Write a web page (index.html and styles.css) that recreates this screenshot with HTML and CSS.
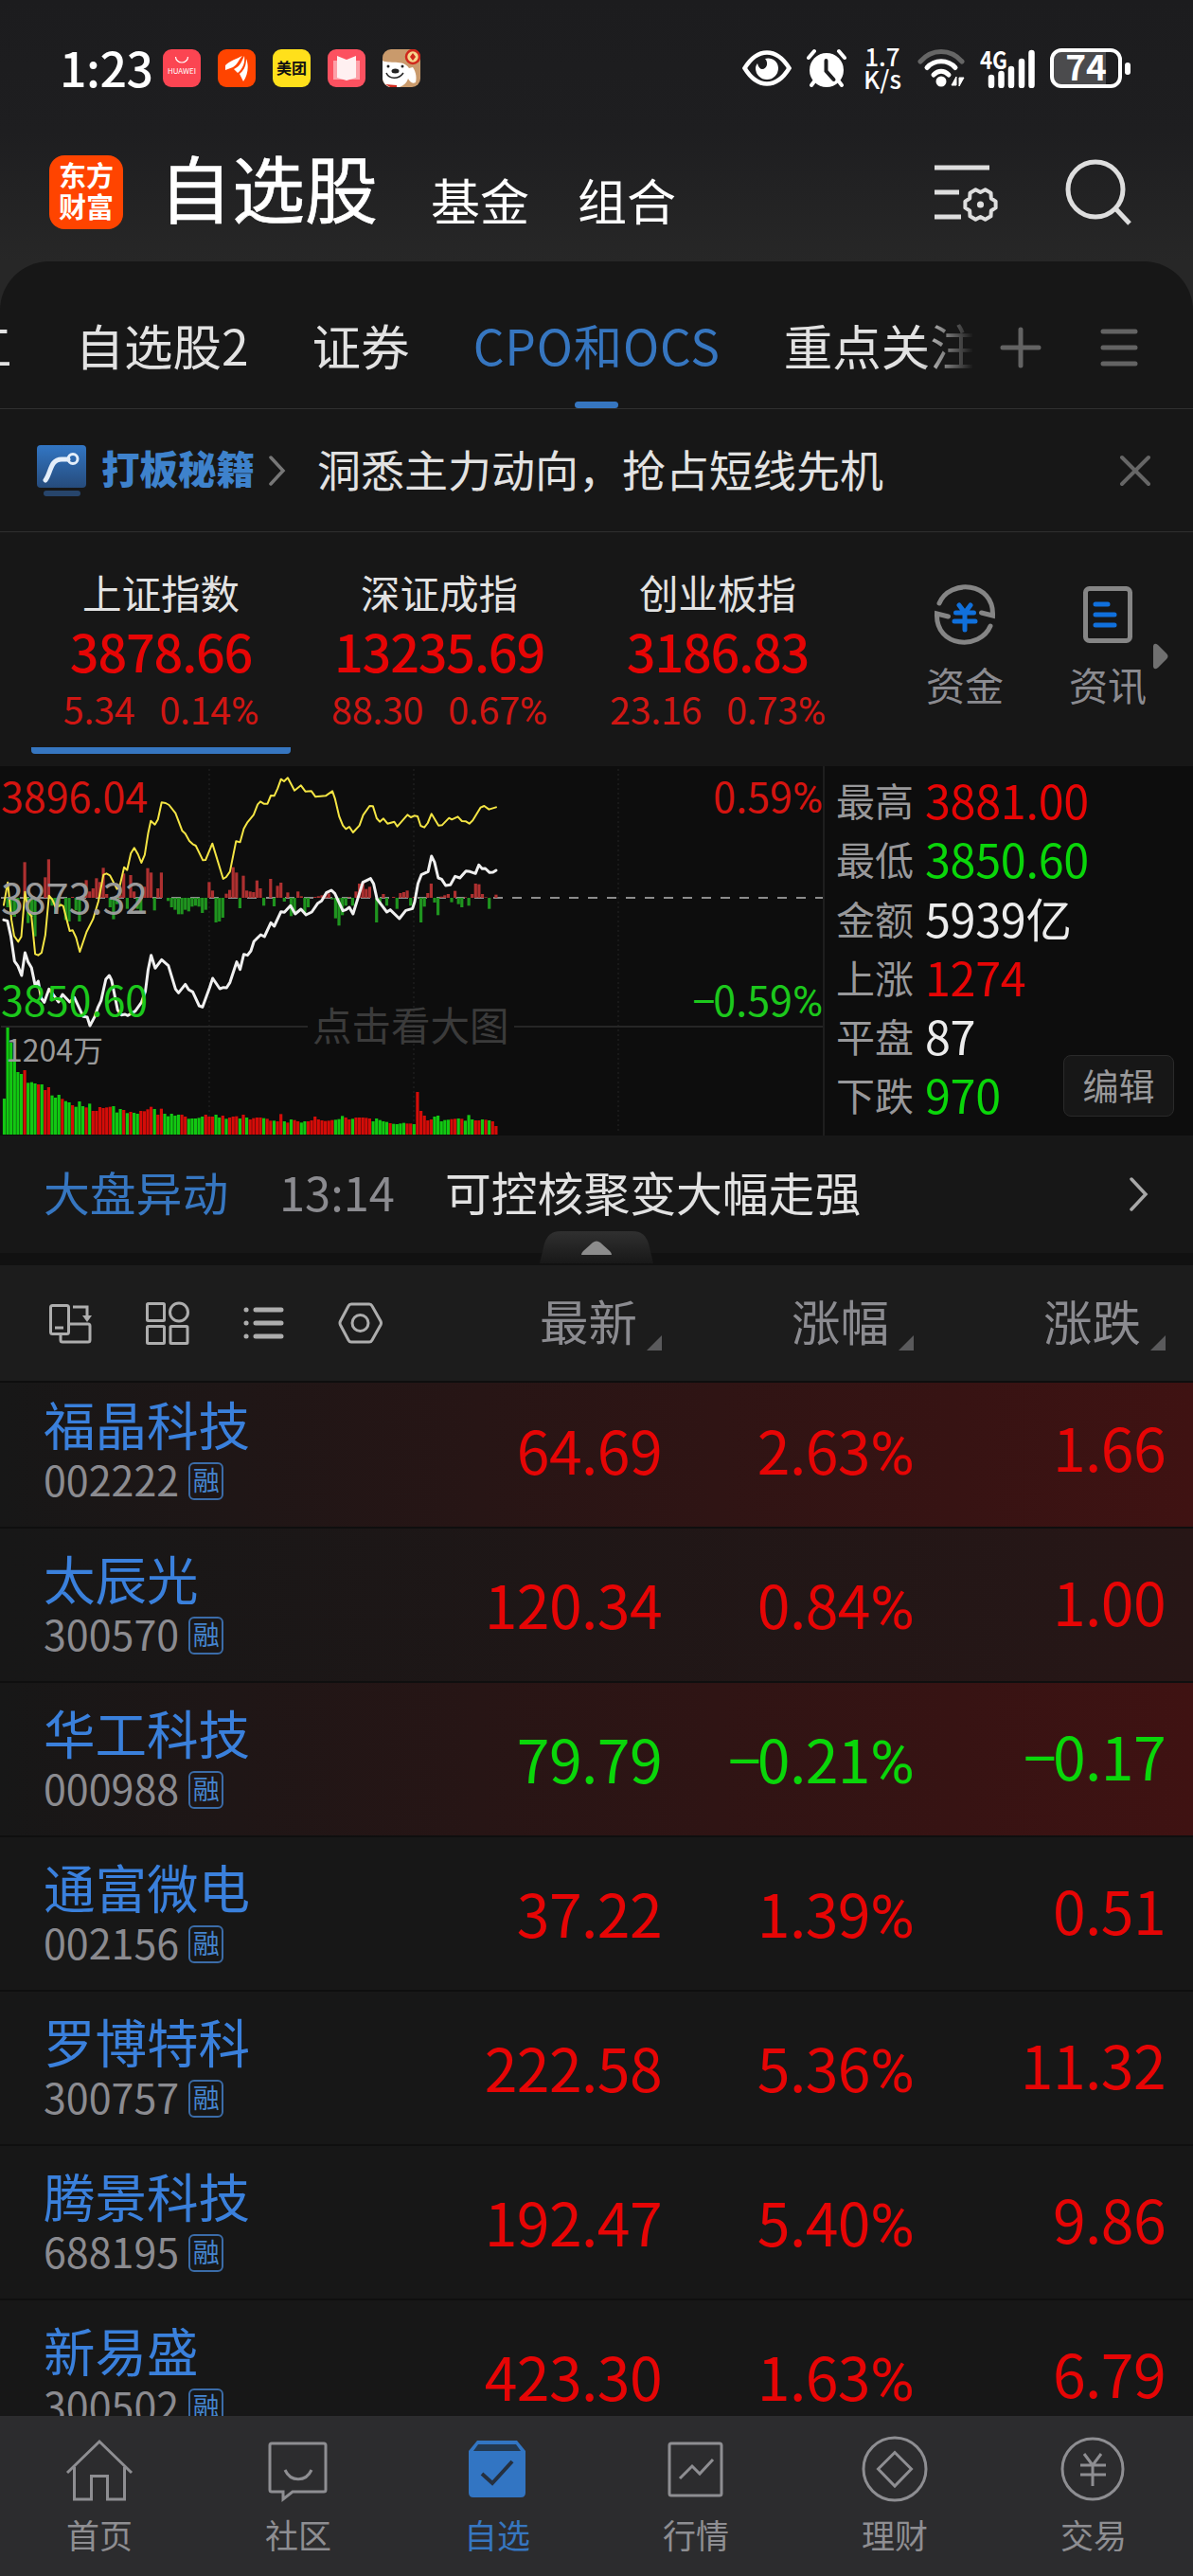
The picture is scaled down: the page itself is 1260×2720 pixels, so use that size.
FILE: index.html
```html
<!DOCTYPE html>
<html lang="zh-CN">
  <head>
    <meta charset="UTF-8" />
    <title>自选股</title>
    <link rel="stylesheet" href="styles.css">
  </head>

  <body>
    <div class="status">
      <span class="clock">1:23</span>
      <div class="apps">
        <svg class="app" viewBox="0 0 40 40">
          <rect width="40" height="40" rx="9" fill="#fb4552" />
          <path d="M13.500 8a6.500 6 0 0 0 13 0" fill="none" stroke="#fff" stroke-width="1.200" />
          <text x="5" y="26" font-size="8" fill="#fff" textLength="30">HUAWEI</text>
        </svg>
        <svg class="app" viewBox="0 0 40 40">
          <rect width="40" height="40" rx="9" fill="#ff4400" />
          <path d="M8 17c5-5 12-7 18-10-4 4-5 9-10 12l-8 3zM17 21c7-3 8-8 11-14 1 7-1 13-7 18zM23 26c5-4 7-9 7-16 3 7 2 17-3 24z" fill="#fff" />
        </svg>
        <svg class="app" viewBox="0 0 40 40">
          <rect width="40" height="40" rx="9" fill="#ffe01b" />
          <text x="20" y="26" font-size="16" font-weight="bold" text-anchor="middle" fill="#111">美团</text>
        </svg>
        <svg class="app" viewBox="0 0 40 40">
          <rect width="40" height="40" rx="9" fill="#fc5160" />
          <path d="M6 12h28v20H6z" fill="#fda0a8" />
          <path d="M10 7l10 4 10-4v23l-10 3-10-3z" fill="#fff0f1" />
        </svg>
        <svg class="app" viewBox="0 0 40 40">
          <rect width="40" height="40" rx="9" fill="#c99a6c" />
          <path d="M0 12c6 4 22-2 28 8l4-1c4 6 4 12 3 16-4 2-6-1-8-4-1 4-4 7-9 9H8c-4-1-7-4-8-9z" fill="#fff" />
          <circle cx="32" cy="8" r="7" fill="#f6d58d" stroke="#d0281c" stroke-width="2.500" />
          <path d="M32 4l3 4-3 4-3-4zM3 37l12 1v2H8z" fill="#d0281c" />
          <ellipse cx="13.500" cy="23" rx="4" ry="2.500" fill="#222" />
          <circle cx="6" cy="18" r="1.500" fill="#222" />
          <circle cx="21" cy="18" r="1.500" fill="#222" />
          <path d="M4 25c3 7 13 7 18 0" fill="none" stroke="#222" stroke-width="1.500" />
        </svg>
      </div>
      <div class="sys">
        <svg width="52" height="40" viewBox="0 0 52 40">
          <path d="M2.500 20C16-2 36-2 49.500 20 36 42 16 42 2.500 20z" fill="none" stroke="#fff" stroke-width="4.500" />
          <path d="M24 10c6-2 14 2 14 10a12 12 0 0 1-24 0c0-2 1-4 2-5 1 4 3 6 5 6 5 0 7-7 3-11z" fill="#fff" />
        </svg>
        <svg width="42" height="42" viewBox="0 0 42 42">
          <circle cx="21" cy="23" r="18" fill="#fff" />
          <path d="M2 10l6-7M40 10l-6-7M8 35l-3 4M34 35l3 4" stroke="#fff" stroke-width="4" stroke-linecap="round" />
          <path d="M20.500 13v11l8 9" fill="none" stroke="#1d1d1f" stroke-width="4" stroke-linecap="round" />
        </svg>
        <div class="rate"><span>1.7</span><span>K/s</span></div>
        <svg width="50" height="42" viewBox="0 0 50 42">
          <g fill="none" stroke="#fff" stroke-width="5" stroke-linecap="round">
            <path d="M3 14c12-14 32-14 44 0" stroke="#666" />
            <path d="M10 20.500c8-9 22-9 30 0" />
            <path d="M17 28c5-5 11-5 16 0" />
          </g>
          <circle cx="25" cy="35" r="5.500" fill="#fff" />
          <path d="M41 30v9h-5zM44 40v-9h5z" fill="#fff" stroke="#fff" />
        </svg>
        <svg width="60" height="42" viewBox="0 0 60 42">
          <text x="0" y="22" font-size="26" font-weight="bold" fill="#fff" textLength="29" lengthAdjust="spacingAndGlyphs">4G</text>
          <path d="M12 31v8M22.500 27v12M33 22v17M44 14v25M54.500 5v34" stroke="#fff" stroke-width="6.500" stroke-linecap="round" />
        </svg>
        <div class="battery"><span>74</span></div>
      </div>
    </div>

    <div class="top">
      <div class="logo"><span>东方</span><span>财富</span></div>
      <h1>自选股</h1>
      <a class="top-link">基金</a>
      <a class="top-link">组合</a>
      <svg class="top-set" width="70" height="66" viewBox="0 0 70 66" fill="none" stroke="#dedede" stroke-width="5">
        <path d="M1 7h58M1 33h26M1 59h28" />
        <path transform="translate(49.500 46)" d="M16.100 -3.400V3.400L11.300 6.500 11 12.300 5.100 15.700 0 13 -5.100 15.700 -11 12.300 -11.300 6.500 -16.100 3.400V-3.400L-11.300 -6.500 -11 -12.300 -5.100 -15.700 0 -13 5.100 -15.700 11 -12.300 11.300 -6.500z" stroke-width="4" stroke-linejoin="round" />
        <circle cx="49.500" cy="46" r="3.600" fill="#dedede" stroke="none" />
      </svg>
      <svg class="top-search" width="70" height="72" viewBox="0 0 70 72" fill="none" stroke="#dedede" stroke-width="5">
        <circle cx="32" cy="33" r="29" />
        <path d="M53 53l15 16" />
      </svg>
    </div>

    <div class="panel">
      <div class="tabs">
        <div class="strip">
          <a>工</a>
          <a>自选股2</a>
          <a>证券</a>
          <a class="on">CPO和OCS</a>
          <a>重点关注</a>
        </div>
        <svg width="44" height="44" viewBox="0 0 44 44" stroke="#636363" stroke-width="5" stroke-linecap="round">
          <path d="M3 22h38M22 3v38" />
        </svg>
        <svg class="menu" width="42" height="44" viewBox="0 0 42 44" stroke="#636363" stroke-width="5" stroke-linecap="round">
          <path d="M4 5h34M4 22h34M4 39h34" />
        </svg>
      </div>

      <div class="banner">
        <svg width="54" height="56" viewBox="0 0 54 56">
          <defs>
            <linearGradient id="g1" x1="0" y1="0" x2="0" y2="1">
              <stop offset="0" stop-color="#3276c4" />
              <stop offset="1" stop-color="#264b7b" />
            </linearGradient>
          </defs>
          <rect x="1" y="1" width="52" height="45" rx="4" fill="url(#g1)" />
          <rect x="8" y="49" width="39" height="6" rx="3" fill="#27456b" />
          <path d="M10 38c6-8 5-22 17-22h7" fill="none" stroke="#e4eefa" stroke-width="5" stroke-linecap="round" />
          <circle cx="39" cy="15.500" r="5" fill="none" stroke="#e4eefa" stroke-width="3" />
        </svg>
        <b>打板秘籍</b>
        <svg class="arrow" width="20" height="34" viewBox="0 0 20 34" fill="none" stroke="#777" stroke-width="3.500" stroke-linecap="round">
          <path d="M3 3l13 14L3 31" />
        </svg>
        <p>洞悉主力动向，抢占短线先机</p>
        <svg class="close" width="36" height="36" viewBox="0 0 36 36" stroke="#666" stroke-width="4" stroke-linecap="round">
          <path d="M4 4l28 28M32 4L4 32" />
        </svg>
      </div>

      <div class="indices">
        <div class="index on">
          <span class="iname">上证指数</span>
          <span class="ival">3878.66</span>
          <span class="ichg"><i>5.34</i><i>0.14<i class="pct">%</i></i></span>
        </div>
        <div class="index">
          <span class="iname">深证成指</span>
          <span class="ival">13235.69</span>
          <span class="ichg"><i>88.30</i><i>0.67<i class="pct">%</i></i></span>
        </div>
        <div class="index">
          <span class="iname">创业板指</span>
          <span class="ival">3186.83</span>
          <span class="ichg"><i>23.16</i><i>0.73<i class="pct">%</i></i></span>
        </div>
        <div class="tool first">
          <svg width="66" height="66" viewBox="0 0 66 66" fill="none" stroke="#858585" stroke-width="5">
            <path d="M6 21C17-5 64-2 62.500 34l-12-3" stroke-linecap="round" />
            <path d="M60 45C49 71 2 68 3.500 32l12 3" stroke-linecap="round" />
            <path d="M27 23l6 8 6-8M23.500 31h19M22 40h22M33 31v18" stroke="#1070dc" stroke-linecap="round" />
          </svg>
          <span>资金</span>
        </div>
        <div class="tool">
          <svg width="66" height="66" viewBox="0 0 66 66" fill="none" stroke="#858585" stroke-width="5">
            <rect x="9.500" y="5.500" width="47" height="55" rx="4" />
            <path d="M20 22h13M20 33h20M20 44h20" stroke="#1070dc" stroke-linecap="round" />
          </svg>
          <span>资讯</span>
        </div>
        <svg class="more" width="16" height="28" viewBox="0 0 16 28">
          <path d="M0 3q1-4 5-1l9 9q3 3 0 6l-9 9q-4 3-5-1z" fill="#707070" />
        </svg>
      </div>

      <div class="market">
        <div class="chart">
          <svg width="869" height="390" viewBox="0 809 869 390">
            <g fill="none" stroke="#262626">
              <path d="M221 812V1197M437 812V1197M653 812V1197" stroke-dasharray="2 3" />
              <path d="M1 1084H325M543 1084H870" stroke-width="2" />
            </g>
            <path d="M1 948H870" stroke="#8c8c8c" stroke-width="2" stroke-dasharray="10 10" />
            <g id="j_bars"></g>
            <g transform="translate(0 800) scale(.35714 .33333)" fill="none" stroke-linejoin="round" stroke-linecap="round">
              <polyline vector-effect="non-scaling-stroke" stroke="#f4e544" stroke-width="2" points="11,467 23,395 34,515 42,565 54,583 63,567 74,425 84,490 93,502 104,622 113,626 123,618 134,562 145,437 155,450 165,475 180,466 187,470 206,549 215,547 225,570 236,615 256,552 275,512 291,455 306,371 315,367 325,373 346,416 354,408 367,347 376,356 387,303 397,286 408,306 418,333 428,308 438,240 446,200 458,212 467,196 478,142 490,144 500,150 519,176 539,232 548,241 560,264 570,274 579,279 600,325 608,324 628,272 660,384 669,378 680,361 698,265 710,268 721,225 731,206 750,181 762,148 770,139 780,146 791,146 801,120 811,121 821,98 831,68 840,75 851,64 871,104 890,88 903,107 921,106 933,124 963,121 983,106 991,131 1003,186 1014,215 1023,226 1033,219 1044,237 1063,215 1074,182 1093,153 1103,154 1114,192 1123,203 1134,193 1146,209 1166,203 1175,218 1205,181 1215,189 1225,184 1235,186 1244,216 1255,221 1265,207 1276,178 1297,215 1307,214 1328,191 1336,196 1354,187 1366,201 1378,202 1388,209 1398,199 1421,158 1432,153 1446,164 1467,157" />
              <polyline vector-effect="non-scaling-stroke" stroke="#f0f0f0" stroke-width="3" points="11,514 22,517 32,565 43,645 53,660 64,690 74,618 83,647 93,665 104,722 113,708 122,762 131,775 145,733 155,747 173,774 185,750 206,774 220,760 246,820 258,822 266,849 280,821 290,790 299,770 313,702 323,690 330,705 348,800 359,815 370,813 378,817 400,803 418,776 430,740 438,672 447,626 459,667 478,640 498,659 519,733 528,745 548,718 558,735 570,742 589,786 599,790 620,728 629,699 650,732 661,728 670,729 680,712 700,647 710,671 721,623 732,626 742,612 751,582 771,561 782,567 801,523 811,534 831,488 841,490 859,469 873,495 890,480 905,498 922,489 940,461 951,454 965,428 980,420 990,430 1014,485 1023,482 1033,474 1044,495 1073,395 1096,383 1105,400 1115,448 1144,489 1154,482 1181,510 1200,484 1220,478 1226,458 1236,399 1246,371 1266,361 1276,312 1285,331 1296,381 1306,385 1318,405 1332,403 1346,376 1360,381 1378,359 1390,361 1406,367 1416,340 1426,352 1435,351 1448,364 1458,363 1467,357" />
            </g>
          </svg>
          <span class="mark m1 red">3896.04</span>
          <span class="mark m2">3873.32</span>
          <span class="mark m3 green">3850.60</span>
          <span class="mark m4">1204万</span>
          <span class="mark m5 red">0.59<i class="pct">%</i></span>
          <span class="mark m6 green"><i class="neg">−</i>0.59<i class="pct">%</i></span>
          <span class="mark m7">点击看大图</span>
        </div>
        <dl class="facts">
          <div><dt>最高</dt><dd class="red">3881.00</dd></div>
          <div><dt>最低</dt><dd class="green">3850.60</dd></div>
          <div><dt>金额</dt><dd>5939亿</dd></div>
          <div><dt>上涨</dt><dd class="red">1274</dd></div>
          <div><dt>平盘</dt><dd>87</dd></div>
          <div><dt>下跌</dt><dd class="green">970</dd></div>
          <a class="edit">编辑</a>
        </dl>
      </div>

      <div class="news">
        <span class="ntag">大盘异动</span>
        <span class="ntime">13:14</span>
        <span class="ntext">可控核聚变大幅走强</span>
        <svg width="24" height="40" viewBox="0 0 24 40" fill="none" stroke="#a8a8a8" stroke-width="3.500" stroke-linecap="round">
          <path d="M4 4l15 16L4 36" />
        </svg>
        <svg class="fold" width="120" height="34" viewBox="0 0 120 34">
          <defs>
            <linearGradient id="g2" x1="0" y1="0" x2="0" y2="1">
              <stop offset="0" stop-color="#303030" />
              <stop offset="1" stop-color="#181818" />
            </linearGradient>
          </defs>
          <path d="M0 34L5 13Q9 0 22 0H98Q111 0 115 13L120 34z" fill="url(#g2)" />
          <path d="M44 25q0-2 2-4l10-9q4-3 8 0l10 9q2 2 2 4z" fill="#8c8c8c" />
        </svg>
      </div>
    </div>

    <div class="thead">
      <div class="views">
        <svg width="48" height="54" viewBox="0 0 48 54" fill="none" stroke="#adadad" stroke-width="3">
          <rect x="3.500" y="8.500" width="19" height="30" rx="2" />
          <path d="M8 32h9M27 10h15v9M14 39v6q0 2 2 2h27q2 0 2-2V30q0-2-2-2H23" />
          <path d="M37 19h10l-5 7z" fill="#adadad" stroke="none" />
        </svg>
        <svg width="48" height="54" viewBox="0 0 48 54" fill="none" stroke="#adadad" stroke-width="3">
          <rect x="3.500" y="6.500" width="18" height="18" rx="1" />
          <circle cx="37" cy="15.500" r="9.500" />
          <rect x="3.500" y="30.500" width="18" height="18" rx="1" />
          <rect x="28" y="30.500" width="18" height="18" rx="1" />
        </svg>
        <svg width="48" height="54" viewBox="0 0 48 54" stroke="#adadad" stroke-width="5" stroke-linecap="round">
          <path d="M6 13h.1M16 13h27M6 27h.1M16 27h27M6 41h.1M16 41h27" />
        </svg>
        <svg width="48" height="54" viewBox="0 0 48 54" fill="none" stroke="#adadad" stroke-width="3" stroke-linejoin="round">
          <path d="M15 7h19q2 0 3 2l9 16q1 2 0 4L37 45q-1 2-3 2H15q-2 0-3-2L3.500 29q-1-2 0-4L12 9q1-2 3-2z" />
          <circle cx="24.500" cy="27" r="8.500" />
        </svg>
      </div>
      <span class="sort">最新</span>
      <span class="sort">涨幅</span>
      <span class="sort">涨跌</span>
    </div>

    <div class="list">
      <div class="row hot">
        <div class="stock"><b>福晶科技</b><span>002222<em>融</em></span></div>
        <span class="num red">64.69</span><span class="num red">2.63<i class="pct">%</i></span><span class="num red">1.66</span>
      </div>
      <div class="row warm">
        <div class="stock"><b>太辰光</b><span>300570<em>融</em></span></div>
        <span class="num red">120.34</span><span class="num red">0.84<i class="pct">%</i></span><span class="num red">1.00</span>
      </div>
      <div class="row hot">
        <div class="stock"><b>华工科技</b><span>000988<em>融</em></span></div>
        <span class="num green">79.79</span><span class="num green"><i class="neg">−</i>0.21<i class="pct">%</i></span><span class="num green"><i class="neg">−</i>0.17</span>
      </div>
      <div class="row">
        <div class="stock"><b>通富微电</b><span>002156<em>融</em></span></div>
        <span class="num red">37.22</span><span class="num red">1.39<i class="pct">%</i></span><span class="num red">0.51</span>
      </div>
      <div class="row">
        <div class="stock"><b>罗博特科</b><span>300757<em>融</em></span></div>
        <span class="num red">222.58</span><span class="num red">5.36<i class="pct">%</i></span><span class="num red">11.32</span>
      </div>
      <div class="row">
        <div class="stock"><b>腾景科技</b><span>688195<em>融</em></span></div>
        <span class="num red">192.47</span><span class="num red">5.40<i class="pct">%</i></span><span class="num red">9.86</span>
      </div>
      <div class="row">
        <div class="stock"><b>新易盛</b><span>300502<em>融</em></span></div>
        <span class="num red">423.30</span><span class="num red">1.63<i class="pct">%</i></span><span class="num red">6.79</span>
      </div>
    </div>

    <div class="nav">
      <a>
        <svg width="84" height="84" viewBox="0 0 84 84">
          <path d="M8 46L42 13l34 33M15.500 40v34H33.500V49.500h17V74h18V40" />
        </svg>
        <span>首页</span>
      </a>
      <a>
        <svg width="84" height="84" viewBox="0 0 84 84">
          <path d="M14 15h55q2 0 2 2v47q0 2-2 2H36l-10 8v-8H14q-2 0-2-2V17q0-2 2-2z" />
          <path d="M28 43c6 13 22 13 28 0" />
        </svg>
        <span>社区</span>
      </a>
      <a class="on">
        <svg width="84" height="84" viewBox="0 0 84 84">
          <path d="M21 12h42l9 11v44q0 5-5 5H17q-5 0-5-5V23z" fill="#3275c3" stroke="none" />
          <path d="M22 16h40l5 7H17z" fill="#23384f" stroke="none" />
          <path d="M26 47l11 10 21-23" stroke="#25303f" stroke-width="4" />
        </svg>
        <span>自选</span>
      </a>
      <a>
        <svg width="84" height="84" viewBox="0 0 84 84">
          <rect x="14" y="15" width="55" height="55" rx="2" />
          <path d="M25 52l13-13 8 8 14-15" />
        </svg>
        <span>行情</span>
      </a>
      <a>
        <svg width="84" height="84" viewBox="0 0 84 84">
          <circle cx="42" cy="42" r="33" />
          <path d="M42 24.500L59.500 42 42 60 24.500 42z" />
        </svg>
        <span>理财</span>
      </a>
      <a>
        <svg width="84" height="84" viewBox="0 0 84 84">
          <circle cx="41" cy="42" r="32" />
          <path d="M32 26l9 12 9-12M28 38h27M28 48h27M41 38v22" />
        </svg>
        <span>交易</span>
      </a>
    </div>
    <script src="chart.js"></script>
  </body>
</html>
```

FILE: styles.css
```css
* {
  padding: 0;
  margin: 0;
  box-sizing: border-box;
}

body {
  width: 1260px;
  height: 2720px;
  overflow: hidden;
  background: linear-gradient(#1c1c1e 0, #1e1e20 140px, #272727 276px, #272727 340px, #171717 341px);
  color: #e2e2e2;
  font-family: "Noto Sans CJK SC", sans-serif;
}

svg {
  display: block;
  flex: none;
}

i,
em {
  font-style: normal;
}

/* 百分号和负号用窄一点的 */
.pct {
  font-family: Roboto, sans-serif;
  font-size: 1.02em;
  line-height: 0;
}

.neg {
  margin: 0 -.05em 0 -.03em;
}

.red {
  color: #e60505;
}

.green {
  color: #0ad60a;
}

/* 状态栏 */
.status {
  display: flex;
  align-items: center;
  height: 144px;
  padding: 0 67px 0 63px;
  color: #fff;
}

.clock {
  width: 109px;
  font-size: 50px;
  font-weight: 500;
  line-height: 60px;
  letter-spacing: -.5px;
  margin-top: -5px;
}

.apps {
  display: flex;
  gap: 18px;
}

.app {
  width: 40px;
  height: 40px;
}

.sys {
  display: flex;
  align-items: center;
  margin-left: auto;
}

.sys svg + svg {
  margin-left: 16px;
}

.rate {
  display: flex;
  flex-direction: column;
  align-items: center;
  width: 44px;
  margin: -3px 15px 0 16px;
  font-size: 26px;
  font-weight: 500;
  line-height: 24px;
}

.battery {
  position: relative;
  width: 76px;
  height: 42px;
  margin: 0 8px 0 14px;
  border: 4px solid #fff;
  border-radius: 12px;
  background: linear-gradient(90deg, #4b4b4d 55px, transparent 55px);
  font-size: 37px;
  font-weight: 700;
  line-height: 29px;
  text-align: center;
}

.battery::after {
  content: "";
  position: absolute;
  right: -13px;
  top: 11px;
  width: 6px;
  height: 13px;
  border-radius: 3px;
  background: #fff;
}

/* 顶部标题 */
.top {
  display: flex;
  height: 132px;
  padding-left: 52px;
}

.logo {
  display: flex;
  flex-direction: column;
  align-items: center;
  width: 78px;
  height: 78px;
  margin-top: 20px;
  padding-top: 4px;
  border-radius: 16px;
  background: #ff4400;
  color: #fff;
  font-size: 29px;
  font-weight: 700;
  line-height: 33px;
}

h1 {
  width: 232px;
  margin: 8px 0 0 38px;
  font-size: 77px;
  font-weight: 400;
  -webkit-text-stroke: .6px #fff;
  line-height: 90px;
  color: #fff;
}

.top-link {
  width: 104px;
  margin: 37px 0 0 51px;
  font-size: 52px;
  line-height: 60px;
  color: #fff;
}

h1 + .top-link {
  margin-left: 55px;
}

.top-set {
  margin: 26px 0 0 272px;
}

.top-search {
  margin: 23px 0 0 69px;
}

.panel {
  background: #171717;
  border-radius: 52px 52px 0 0;
}

.tabs {
  display: flex;
  align-items: center;
  height: 156px;
  padding-top: 26px;
  border-bottom: 1px solid #2f2f2f;
}

.strip {
  display: flex;
  gap: 67px;
  width: 1030px;
  height: 129px;
  margin-right: 26px;
  overflow: hidden;
  -webkit-mask-image: linear-gradient(90deg, #000 970px, transparent 1028px);
  mask-image: linear-gradient(90deg, #000 970px, transparent 1028px);
}

.strip a {
  position: relative;
  flex: none;
  font-size: 51.5px;
  line-height: 124px;
}

.strip a:first-child {
  margin-left: -39px;
}

.strip .on {
  color: #3676c0;
  letter-spacing: .8px;
}

.strip .on::after {
  content: "";
  position: absolute;
  left: 50%;
  bottom: 0;
  width: 46px;
  height: 7px;
  margin-left: -23px;
  border-radius: 4px;
  background: #3676c0;
}

.tabs svg {
  margin-top: -26px;
  position: relative;
  top: 13px;
}

.tabs .menu {
  margin-left: 61px;
}

.banner {
  display: flex;
  align-items: center;
  height: 130px;
  padding: 0 43px 0 38px;
  border-bottom: 1px solid #2f2f2f;
}

.banner b {
  margin-left: 15px;
  font-size: 40.5px;
  font-weight: 900;
  line-height: 60px;
  color: #3e82cc;
  margin-top: -5px;
}

.banner .arrow {
  margin-left: 14px;
}

.banner p {
  margin: -6px 0 0 32px;
  font-size: 46px;
  line-height: 60px;
}

.banner .close {
  margin-left: auto;
}

/* 指数 */
.indices {
  position: relative;
  display: flex;
  height: 247px;
  padding-left: 33px;
}

.index {
  display: flex;
  flex-direction: column;
  align-items: center;
  width: 274px;
  height: 234px;
  margin-right: 20px;
  padding-top: 38px;
}

.index.on {
  border-bottom: 7px solid #3676c0;
  border-radius: 0 0 4px 4px;
}

.iname {
  font-size: 41.5px;
  line-height: 50px;
}

.ival {
  margin-top: 7px;
  font-size: 54px;
  font-weight: 500;
  line-height: 60px;
  letter-spacing: -1.2px;
  color: #e60505;
}

.ichg {
  display: flex;
  gap: 26px;
  margin-top: 6px;
  font-size: 39.5px;
  line-height: 50px;
  letter-spacing: -.3px;
  color: #d01613;
}

.tool {
  display: flex;
  flex-direction: column;
  align-items: center;
  width: 84px;
  margin-left: 67px;
  padding-top: 54px;
  font-size: 41px;
  color: #8b8b90;
}

.tool.first {
  margin-left: 62px;
}

.tool span {
  margin-top: 15px;
  line-height: 50px;
}

.more {
  position: absolute;
  left: 1218px;
  top: 117px;
}

/* 分时图 */
.market {
  display: flex;
  height: 390px;
  background: #0d0d0d;
}

.chart {
  position: relative;
  width: 871px;
  border-right: 2px solid #1e1e1e;
}

.mark {
  position: absolute;
  font-size: 43px;
  line-height: 50px;
  color: #9a9a9a;
}

.mark.red {
  color: #d41410;
}

.mark.green {
  color: #1cc81c;
}

.m1 {
  left: 1px;
  top: 5px;
}

.m2 {
  left: 1px;
  top: 112px;
}

.m3 {
  left: 1px;
  top: 220px;
}

.m4 {
  left: 6px;
  top: 275px;
  font-size: 32px;
  line-height: 46px;
}

.m5 {
  right: 0;
  top: 5px;
}

.m6 {
  right: 0;
  top: 220px;
}

.m7 {
  left: 330px;
  top: 247px;
  font-size: 41.5px;
  line-height: 50px;
  color: #3b3b3b;
}

.facts {
  position: relative;
  flex: 1;
  padding: 4px 0 0 12px;
}

.facts div {
  display: flex;
  height: 62.3px;
  line-height: 62px;
}

dt {
  width: 94px;
  font-size: 41px;
  color: #98989a;
}

dd {
  font-size: 48.5px;
  letter-spacing: -.3px;
}

dd:not([class]) {
  color: #ececec;
}

.edit {
  position: absolute;
  left: 252px;
  top: 305px;
  width: 117px;
  height: 65px;
  border: 1px solid #2a2a2a;
  border-radius: 8px;
  background: #171717;
  font-size: 38px;
  line-height: 59px;
  text-align: center;
  color: #98989a;
}

.news {
  position: relative;
  display: flex;
  align-items: center;
  height: 137px;
  padding: 0 45px 6px 46px;
  border-bottom: 13px solid #111;
  font-size: 48.8px;
  line-height: 60px;
}

.ntag {
  width: 249px;
  color: #3676c0;
}

.ntime {
  width: 175px;
  color: #8b8b90;
}

.news svg {
  margin-left: auto;
  margin-top: 6px;
}

.news .fold {
  position: absolute;
  left: 570px;
  top: 101px;
  margin: 0;
}

/* 自选列表 */
.thead {
  display: flex;
  align-items: center;
  height: 124px;
  background: #1c1c1c;
  border-bottom: 2px solid #0e0e0e;
}

.views {
  display: flex;
  gap: 54px;
  width: 433px;
  padding-left: 50px;
}

.sort {
  position: relative;
  width: 266px;
  margin-top: -7px;
  padding-right: 26px;
  font-size: 51.5px;
  line-height: 60px;
  text-align: right;
  color: #8b8b90;
}

.sort::after {
  content: "";
  position: absolute;
  right: 0;
  bottom: -2px;
  border-left: 16px solid transparent;
  border-bottom: 16px solid #5a5a5c;
}

/* 第一行有一部分滚动到表头下面 */
.list {
  height: 1091px;
  overflow: hidden;
}

.row {
  display: flex;
  height: 163px;
  padding-left: 46px;
  border-bottom: 2px solid #0f0f0f;
  background: #171717;
}

.row:first-child {
  margin-top: -9px;
}

.hot {
  background: linear-gradient(90deg, #171717, #3f1212);
}

.warm {
  background: linear-gradient(90deg, #171717, #271616);
}

.stock {
  width: 387px;
  padding-top: 21px;
}

.stock b {
  display: block;
  font-size: 54.5px;
  font-weight: 400;
  line-height: 62px;
  color: #3a80dc;
}

.stock span {
  display: flex;
  align-items: center;
  height: 50px;
  margin-top: 3px;
  font-size: 43px;
  line-height: 50px;
  padding-bottom: 3px;
  color: #8b8b90;
}

.stock em {
  width: 37px;
  height: 40px;
  margin: 6px 0 0 10px;
  border: 2px solid #3b6ca8;
  border-radius: 6px;
  font-size: 28px;
  line-height: 33px;
  text-align: center;
  color: #4585cf;
}

.num {
  width: 266px;
  padding-top: 44px;
  font-size: 62.5px;
  line-height: 70px;
  letter-spacing: -.6px;
  text-align: right;
}

.num:last-child {
  padding-top: 41px;
}

.nav {
  display: flex;
  height: 169px;
  background: #2c2c2e;
}

.nav a {
  display: flex;
  flex-direction: column;
  align-items: center;
  width: 210px;
  padding-top: 14px;
  font-size: 35px;
  line-height: 40px;
  color: #8e8e92;
}

.nav svg {
  fill: none;
  stroke: #8e8e92;
  stroke-width: 3;
}

.nav span {
  margin-top: 7px;
}

.nav .on {
  color: #3676c0;
}
```

FILE: chart.js
```js
// 每分钟的柱子  正数红色 负数绿色
var power = [0, -30, -45, -60, -45, 0, 113, -80, -60, -122, 0, 0, 65, 122, -25, -50, -30, 0, -70, -75, 3, -40, -75, 0, 56, 20, 30, 62, 50, 95, 12, -30, -68, -20, 10, 77, -35, 72, 20, -35, -45, 35, 94, 80, -40, 30, 80, 0, -10, -30, -38, -52, -52, -38, -43, -28, -25, -28, -48, -38, 50, 23, -78, -75, -63, 13, 25, 97, 80, -33, 70, 23, 20, 18, 55, 30, -25, 0, 60, -27, 38, 48, -12, 17, -58, -45, 20, 5, -48, -30, 0, 3, 5, 8, 12, 14, -5, -65, -88, -55, -25, 2, -25, 20, 45, 50, 28, 35, 0, -78, -15, 12, -25, 0, 3, -35, 15, 18, 23, -25, 3, 0, -78, -28, 15, 45, -15, -55, 4, 8, 12, -14, 22, -20, -30, 2, -25, 12, 45, 43, 12, 2, -35, 0, 10];
var volume = [-114, -339, -291, -239, -198, -192, 204, -164, -166, -162, 159, -159, 141, 150, -124, -117, -126, 113, -106, -102, 93, -88, -105, -90, 86, -98, 75, 75, 87, 84, 86, 88, -90, -70, -81, 78, -68, 72, -69, -66, 75, 74, 80, 88, -81, 63, 82, -66, -58, -66, -60, -63, 63, 57, -50, -51, -51, -53, -57, 63, 57, 57, -63, -54, 60, -50, 54, 57, 58, -51, 63, -54, 48, 52, 54, 54, -52, 50, 44, -44, 42, 65, -42, 38, -48, 46, 42, -38, -42, 42, 45, 57, 48, 45, 43, 44, 46, -47, -49, -59, 54, 48, -50, 54, 54, 54, 53, 51, -42, -51, -46, -42, -40, 36, -34, -33, -35, -37, 35, 35, -33, 135, 75, 60, 45, 48, -57, -60, -42, -46, -47, 49, 50, -51, 50, -44, -62, -48, 45, 45, -48, 47, -45, 42, 27];

function bar(x, y, h, color) {
  return '<rect x="' + x + '" y="' + y + '" width="3.2" height="' + h + '" fill="' + color + '"/>';
}

var html = "";
for (var i = 0; i < power.length; i++) {
  var x = (2.9 + i * 3.607).toFixed(1);
  var p = Math.abs(power[i]) / 3;
  html += bar(x, power[i] > 0 ? 948 - p : 948, p, power[i] > 0 ? "#ad3030" : "#1f941f");
  var v = Math.abs(volume[i]) / 3;
  html += bar(x, 1198 - v, v, volume[i] > 0 ? "#d40c08" : "#12c812");
}
document.getElementById("j_bars").innerHTML = html;
```
